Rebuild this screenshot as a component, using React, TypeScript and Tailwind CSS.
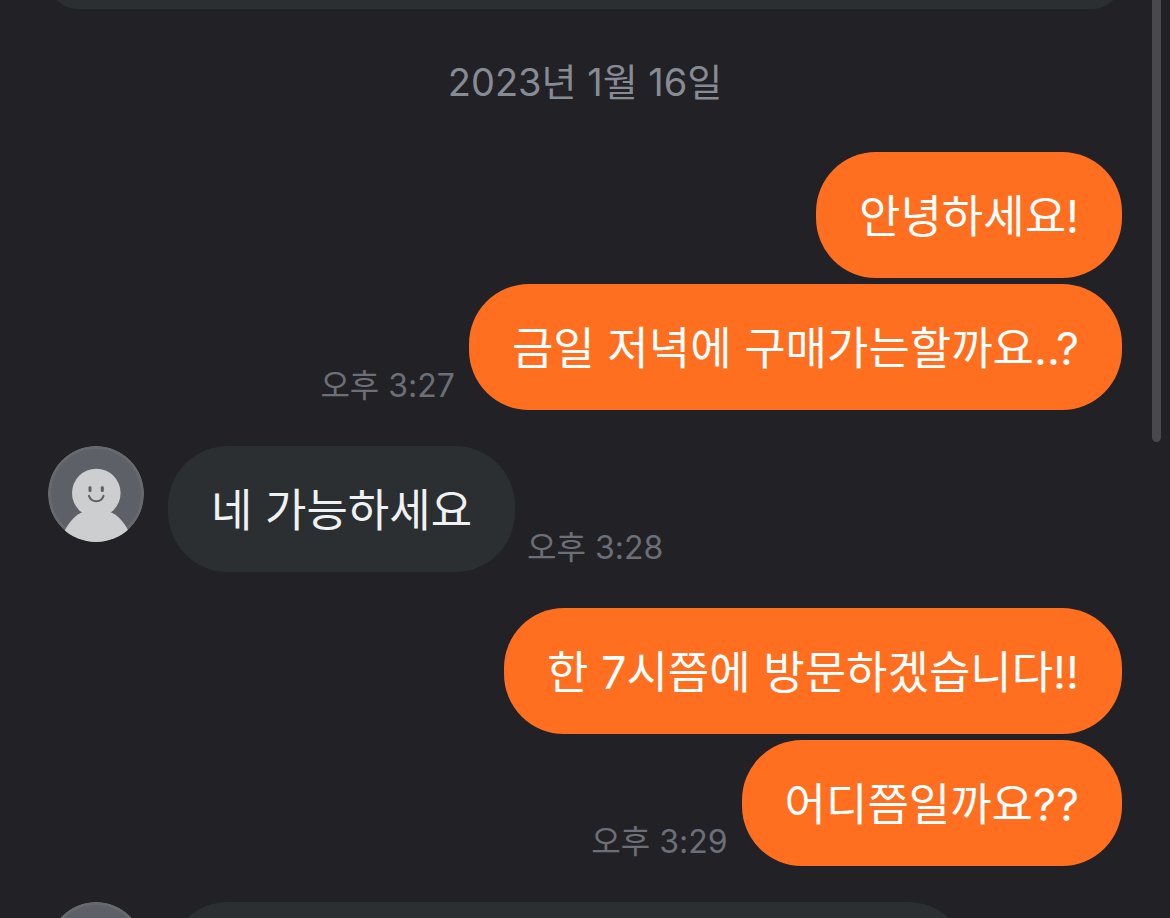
type Side = 'mine' | 'theirs';

type Group = {
  side: Side;
  messages: string[];
  time: string;
};

const groups: Group[] = [
  { side: 'mine', messages: ['안녕하세요!', '금일 저녁에 구매가는할까요..?'], time: '오후 3:27' },
  { side: 'theirs', messages: ['네 가능하세요'], time: '오후 3:28' },
  { side: 'mine', messages: ['한 7시쯤에 방문하겠습니다!!', '어디쯤일까요??'], time: '오후 3:29' },
];

function Avatar() {
  return (
    <svg viewBox="0 0 96 96" className="size-24 shrink-0" aria-hidden="true">
      <defs>
        <clipPath id="avatar-circle">
          <circle cx="48" cy="48" r="48" />
        </clipPath>
      </defs>
      <g clipPath="url(#avatar-circle)">
        <circle cx="48" cy="48" r="48" fill="#5d6067" />
        <circle cx="48" cy="48" r="46.5" fill="none" stroke="#68696d" strokeWidth="3" />
        <circle cx="48.3" cy="47" r="24.3" fill="#cdced0" />
        <path d="M16 86 C22 74 29 68 35 66 H62 C68 68 75 74 81 86 V96 H16 Z" fill="#cdced0" />
        <rect x="40.5" y="40.3" width="3" height="5.6" rx="1.2" fill="#5d6067" />
        <rect x="52.8" y="40.3" width="3" height="5.6" rx="1.2" fill="#5d6067" />
        <path d="M41 50 C43.5 57 53 57 55.5 50" fill="none" stroke="#5d6067" strokeWidth="2.2" strokeLinecap="round" />
      </g>
    </svg>
  );
}

function Bubble({ side, text }: { side: Side; text: string }) {
  const color = side === 'mine' ? 'bg-[#ff6f1f] text-white' : 'bg-[#2b2f32] text-[#f0f1f3]';
  return (
    <p className={`rounded-[60px] px-[43px] pt-[38px] pb-[34px] text-[45px] leading-[54px] ${color}`}>
      {text}
    </p>
  );
}

function Time({ value }: { value: string }) {
  return <time className="mb-1 shrink-0 text-[32px] leading-10 text-[#6c6f77]">{value}</time>;
}

function MessageGroup({ side, messages, time }: Group) {
  if (side === 'theirs') {
    return (
      <li className="flex items-start gap-6">
        <Avatar />
        <div className="flex flex-col items-start gap-1.5">
          {messages.map((text) => (
            <div key={text} className="flex items-end gap-3">
              <Bubble side={side} text={text} />
              <Time value={time} />
            </div>
          ))}
        </div>
      </li>
    );
  }
  return (
    <li className="flex flex-col items-end gap-1.5">
      {messages.map((text, i) => (
        <div key={text} className="flex items-end gap-3.5">
          {i === messages.length - 1 && <Time value={time} />}
          <Bubble side={side} text={text} />
        </div>
      ))}
    </li>
  );
}

export default function App() {
  return (
    <main className="relative h-screen overflow-hidden bg-[#222125] px-12 font-['Inter','Noto_Sans_CJK_KR',sans-serif]">
      <div className="flex h-[9px] flex-col justify-end overflow-hidden">
        <div className="h-20 shrink-0 rounded-[30px] bg-[#2b2f32]" />
      </div>
      <h2 className="pt-[49px] pb-[46px] text-center text-[38px] leading-[48px] font-normal text-[#868b94]">
        2023년 1월 16일
      </h2>
      <ul className="flex flex-col gap-9">
        {groups.map((group) => (
          <MessageGroup key={group.time} {...group} />
        ))}
        <li className="flex items-start gap-6">
          <Avatar />
          <div className="h-[126px] w-full max-w-[800px] rounded-[60px] bg-[#2b2f32]" />
        </li>
      </ul>
      <div className="absolute top-0 right-[9px] h-[442px] w-[9px] rounded-b-full bg-[#49484c]" />
    </main>
  );
}
